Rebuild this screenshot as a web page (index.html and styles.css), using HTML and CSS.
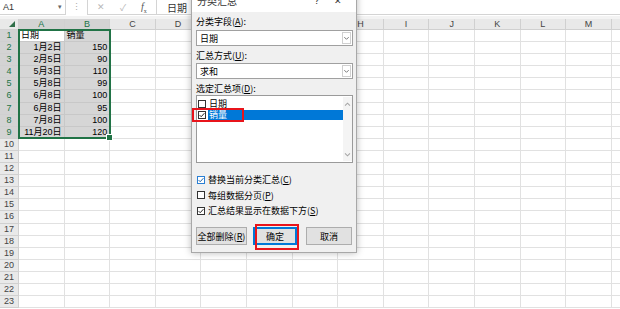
FILE: index.html
```html
<!DOCTYPE html>
<html>
    <head>
        <meta charset="utf-8">
        <link rel="stylesheet" href="styles.css">
    </head>
    <body>
        <div id="app">
            <div class="fbar">
                <div class="namebox"><span>A1</span><span class="nb-arrow">&#9662;</span></div>
                <div class="fdots">&#8942;</div>
                <div class="fbtns">
                    <span class="fbtn">&#10005;</span>
                    <span class="fbtn">&#10003;</span>
                    <span class="fbtn fx"><i>f</i><sub>x</sub></span>
                </div>
                <div class="finput">日期</div>
            </div>

            <div class="sheet-wrap">
                <div id="sheet" class="sheet"></div>
                <div class="selbox"><span class="handle"></span></div>
            </div>

            <div class="dialog">
                <div class="dlg-title">
                    <span class="dlg-name">分类汇总</span>
                    <span class="dlg-help">?</span>
                    <span class="dlg-close">&#10005;</span>
                </div>
                <div class="dlg-body">
                    <div class="lbl">分类字段(<u>A</u>):</div>
                    <div class="combo">
                        <span>日期</span>
                        <span class="combo-btn"><svg viewBox="0 0 8 8"><path d="M1.5 3 L4 5.5 L6.5 3" fill="none" stroke="#555" stroke-width="0.9"/></svg></span>
                    </div>
                    <div class="lbl lbl2">汇总方式(<u>U</u>):</div>
                    <div class="combo combo2">
                        <span>求和</span>
                        <span class="combo-btn"><svg viewBox="0 0 8 8"><path d="M1.5 3 L4 5.5 L6.5 3" fill="none" stroke="#555" stroke-width="0.9"/></svg></span>
                    </div>
                    <div class="lbl">选定汇总项(<u>D</u>):</div>
                    <div class="listbox">
                        <div class="items">
                            <div class="item">
                                <svg class="cb" viewBox="0 0 8 8"><rect x=".5" y=".5" width="7" height="7" fill="#fff" stroke="#333"/></svg>
                                <span class="itext">日期</span>
                            </div>
                            <div class="item">
                                <svg class="cb" viewBox="0 0 8 8"><rect x=".5" y=".5" width="7" height="7" fill="#fff" stroke="#333"/><path d="M1.6 4.1 L3.2 5.7 L6.4 2.2" fill="none" stroke="#222" stroke-width="1"/></svg>
                                <span class="itext picked">销量</span>
                            </div>
                        </div>
                        <div class="vscroll">
                            <svg viewBox="0 0 8 8"><path d="M1.8 5 L4 2.8 L6.2 5" fill="none" stroke="#a6a6a6" stroke-width="0.9"/></svg>
                            <svg viewBox="0 0 8 8"><path d="M1.8 3 L4 5.2 L6.2 3" fill="none" stroke="#a6a6a6" stroke-width="0.9"/></svg>
                        </div>
                    </div>

                    <div class="checks">
                        <div class="chk">
                            <svg class="cb" viewBox="0 0 8 8"><rect x=".5" y=".5" width="7" height="7" fill="#fff" stroke="#2a7fd4"/><path d="M1.6 4.1 L3.2 5.7 L6.4 2.2" fill="none" stroke="#1f5f9f" stroke-width="1"/></svg>
                            <span>替换当前分类汇总(<u>C</u>)</span>
                        </div>
                        <div class="chk">
                            <svg class="cb" viewBox="0 0 8 8"><rect x=".5" y=".5" width="7" height="7" fill="#fff" stroke="#333"/></svg>
                            <span>每组数据分页(<u>P</u>)</span>
                        </div>
                        <div class="chk">
                            <svg class="cb" viewBox="0 0 8 8"><rect x=".5" y=".5" width="7" height="7" fill="#fff" stroke="#333"/><path d="M1.6 4.1 L3.2 5.7 L6.4 2.2" fill="none" stroke="#222" stroke-width="1"/></svg>
                            <span>汇总结果显示在数据下方(<u>S</u>)</span>
                        </div>
                    </div>

                    <div class="btns">
                        <div class="btn btn-del">全部删除(<u>R</u>)</div>
                        <div class="btn btn-ok">确定</div>
                        <div class="btn btn-cancel">取消</div>
                    </div>
                </div>
            </div>

            <!-- 红框标注 -->
            <div class="mark mark-item"></div>
            <div class="mark mark-ok"></div>
        </div>
        <script src="script.js"></script>
    </body>
</html>
```

FILE: styles.css
```css
html,
body {
    margin: 0;
    padding: 0;
    background: #fff;
}

#app {
    position: relative;
    width: 620px;
    height: 309px;
    overflow: hidden;
    font-family: "Liberation Sans", "Noto Sans CJK SC", sans-serif;
    font-size: 9px;
    color: #000;
}

/* formula bar */
.fbar {
    height: 19px;
    display: flex;
    align-items: flex-start;
    background: #fff;
    box-sizing: border-box;
    border-bottom: 3px solid #f3f3f3;
}

.namebox {
    width: 66px;
    height: 15px;
    box-sizing: border-box;
    border-right: 1px solid #d4d4d4;
    border-bottom: 1px solid #d4d4d4;
    display: flex;
    justify-content: space-between;
    align-items: center;
    padding: 0 3px 0 3px;
    color: #333;
    font-size: 9px;
}

.nb-arrow {
    color: #666;
    font-size: 7px;
}

.fdots {
    width: 21px;
    text-align: center;
    color: #aaa;
    font-size: 9px;
    line-height: 14px;
}

.fbtns {
    width: 70px;
    height: 15px;
    box-sizing: border-box;
    border-left: 1px solid #d4d4d4;
    border-right: 1px solid #d4d4d4;
    border-bottom: 1px solid #d4d4d4;
    display: flex;
    justify-content: space-around;
    align-items: center;
    padding: 0 2px;
}

.fbtn {
    color: #b8b8b8;
    font-size: 9px;
}

.fx {
    color: #555;
    font-family: "Liberation Serif", serif;
    font-size: 10px;
}

.fx sub {
    font-size: 6px;
}

.finput {
    flex: 1;
    height: 15px;
    box-sizing: border-box;
    border-bottom: 1px solid #d4d4d4;
    padding-left: 10px;
    line-height: 15px;
    font-size: 10px;
    color: #333;
    font-family: "Noto Sans CJK SC", sans-serif;
}

/* sheet */
.sheet-wrap {
    position: relative;
}

.sheet {
    display: grid;
    grid-template-columns: 19px repeat(14, 45.6px);
    grid-template-rows: 11px;
    grid-auto-rows: 12.1px;
}

.sheet > div {
    box-sizing: border-box;
    border-right: 1px solid #e1e1e1;
    border-bottom: 1px solid #e1e1e1;
    overflow: hidden;
    white-space: nowrap;
    line-height: 11px;
}

.corner,
.colhead,
.rowhead {
    background: #e9e9e9;
    color: #444;
    text-align: center;
}

.sheet > .corner,
.sheet > .colhead,
.sheet > .rowhead {
    border-color: #d0d0d0;
}

.corner {
    position: relative;
}

.corner::after {
    content: "";
    position: absolute;
    right: 3px;
    bottom: 2px;
    border-left: 6px solid transparent;
    border-bottom: 6px solid #2f6e48;
}

.colhead {
    font-size: 9px;
}

.colhead.on,
.rowhead.on {
    background: #d3d3d3;
    color: #217346;
}

.sheet > .colhead.on {
    border-bottom: 1px solid #217346;
}

.sheet > .rowhead.on {
    border-right: 1px solid #217346;
}

.rowhead {
    font-size: 9px;
}

.cell {
    padding: 0 2px;
    font-family: "Liberation Sans", "Noto Sans CJK SC", sans-serif;
}

.cell.sel {
    background: #d6d6d6;
}

.sheet > .cell.sel {
    border-color: #c8c8c8;
}

.cell.active {
    background: #fff;
}

.cell.num {
    text-align: right;
}

.selbox {
    position: absolute;
    left: 18px;
    top: 10px;
    width: 93px;
    height: 110px;
    box-sizing: border-box;
    border: 2px solid #217346;
}

.handle {
    position: absolute;
    right: -4px;
    bottom: -4px;
    width: 5px;
    height: 5px;
    background: #217346;
    border: 1px solid #fff;
}

/* dialog */
.dialog {
    position: absolute;
    left: 191px;
    top: -13px;
    width: 166px;
    box-sizing: border-box;
    background: #f0f0f0;
    border: 1px solid #a8a8a8;
    box-shadow: 0 0 7px rgba(0, 0, 0, 0.28);
    font-family: "Noto Sans CJK SC", sans-serif;
    font-size: 9px;
}

.dlg-title {
    height: 24px;
    background: #fff;
    display: flex;
    align-items: center;
    padding: 0 0 0 5px;
}

.dlg-name {
    flex: 1;
    font-size: 10px;
    color: #333;
}

.dlg-help {
    width: 20px;
    font-family: "Liberation Sans", sans-serif;
    font-size: 10px;
    color: #333;
}

.dlg-close {
    width: 22px;
    font-size: 9px;
    color: #333;
}

.dlg-body {
    padding: 0 3px 7px 4px;
}

.lbl {
    height: 12px;
    line-height: 12px;
    margin-top: 4px;
    white-space: nowrap;
}

.lbl u,
.chk u,
.btn u {
    line-height: 1;
}

.combo {
    margin-top: 2px;
    height: 16px;
    box-sizing: border-box;
    background: #fff;
    border: 1px solid #a0a0a0;
    display: flex;
    justify-content: space-between;
    align-items: center;
    padding-left: 3px;
}

.combo2 {
    margin-top: 1px;
}

.combo-btn {
    width: 9px;
    height: 12px;
    margin-right: 1px;
    box-sizing: border-box;
    border: 1px solid #d0d0d0;
    display: flex;
    align-items: center;
    justify-content: center;
}

.combo-btn svg {
    width: 8px;
    height: 8px;
}

.listbox {
    height: 68px;
    box-sizing: border-box;
    background: #fff;
    border: 1px solid #9a9a9a;
    display: flex;
}

.items {
    flex: 1;
    padding-top: 3px;
}

.item {
    height: 10px;
    display: flex;
    align-items: center;
    padding-left: 1px;
}

.item + .item {
    margin-top: 1px;
}

.cb {
    width: 8px;
    height: 8px;
    flex: none;
}

.itext {
    margin-left: 2px;
    padding-left: 1px;
    line-height: 10px;
}

.itext.picked {
    flex: none;
    width: 134px;
    background: #0078d7;
    color: #fff;
}

.vscroll {
    width: 9px;
    margin: 1px 1px 1px 0;
    background: #f4f4f4;
    display: flex;
    flex-direction: column;
    justify-content: space-between;
    padding: 3px 0 2px;
}

.vscroll svg {
    width: 9px;
    height: 9px;
}

.checks {
    margin-top: 9px;
}

.chk {
    height: 15.5px;
    display: flex;
    align-items: center;
    padding-left: 1px;
    white-space: nowrap;
}

.chk span {
    margin-left: 3px;
}

.btns {
    margin-top: 8.5px;
    display: flex;
}

.btn {
    height: 18px;
    box-sizing: border-box;
    background: #e1e1e1;
    border: 1px solid #adadad;
    display: flex;
    align-items: center;
    justify-content: center;
    white-space: nowrap;
}

.btn-del {
    width: 51px;
}

.btn-ok {
    width: 44px;
    margin-left: 6px;
    border: 2px solid #0078d7;
}

.btn-cancel {
    width: 46px;
    margin-left: 9px;
}

/* annotations */
.mark {
    position: absolute;
    box-sizing: border-box;
    border: 2px solid #e8141b;
}

.mark-item {
    left: 192px;
    top: 108px;
    width: 52px;
    height: 14px;
}

.mark-ok {
    left: 255px;
    top: 224px;
    width: 44px;
    height: 26px;
}
```

FILE: script.js
```js
var cols = "ABCDEFGHIJKLMN".split("");
var data = [
    ["日期", "销量"],
    ["1月2日", 150],
    ["2月5日", 90],
    ["5月3日", 110],
    ["5月8日", 99],
    ["6月8日", 100],
    ["6月8日", 95],
    ["7月8日", 100],
    ["11月20日", 120]
];

var sheet = document.getElementById("sheet");

function cell(cls, text) {
    var d = document.createElement("div");
    d.className = cls;
    if (text !== undefined && text !== "") d.textContent = text;
    sheet.appendChild(d);
}

cell("corner");
cols.forEach(function(c, i) {
    cell("colhead" + (i < 2 ? " on" : ""), c);
});

for (var r = 1; r <= 23; r++) {
    var inSel = r <= data.length;
    cell("rowhead" + (inSel ? " on" : ""), r);
    cols.forEach(function(c, i) {
        var cls = "cell";
        var text = "";
        if (inSel && i < 2) {
            cls += " sel";
            text = data[r - 1][i];
            if (r > 1) cls += " num";
        }
        if (r == 1 && i == 0) cls += " active";
        cell(cls, text);
    });
}
```
